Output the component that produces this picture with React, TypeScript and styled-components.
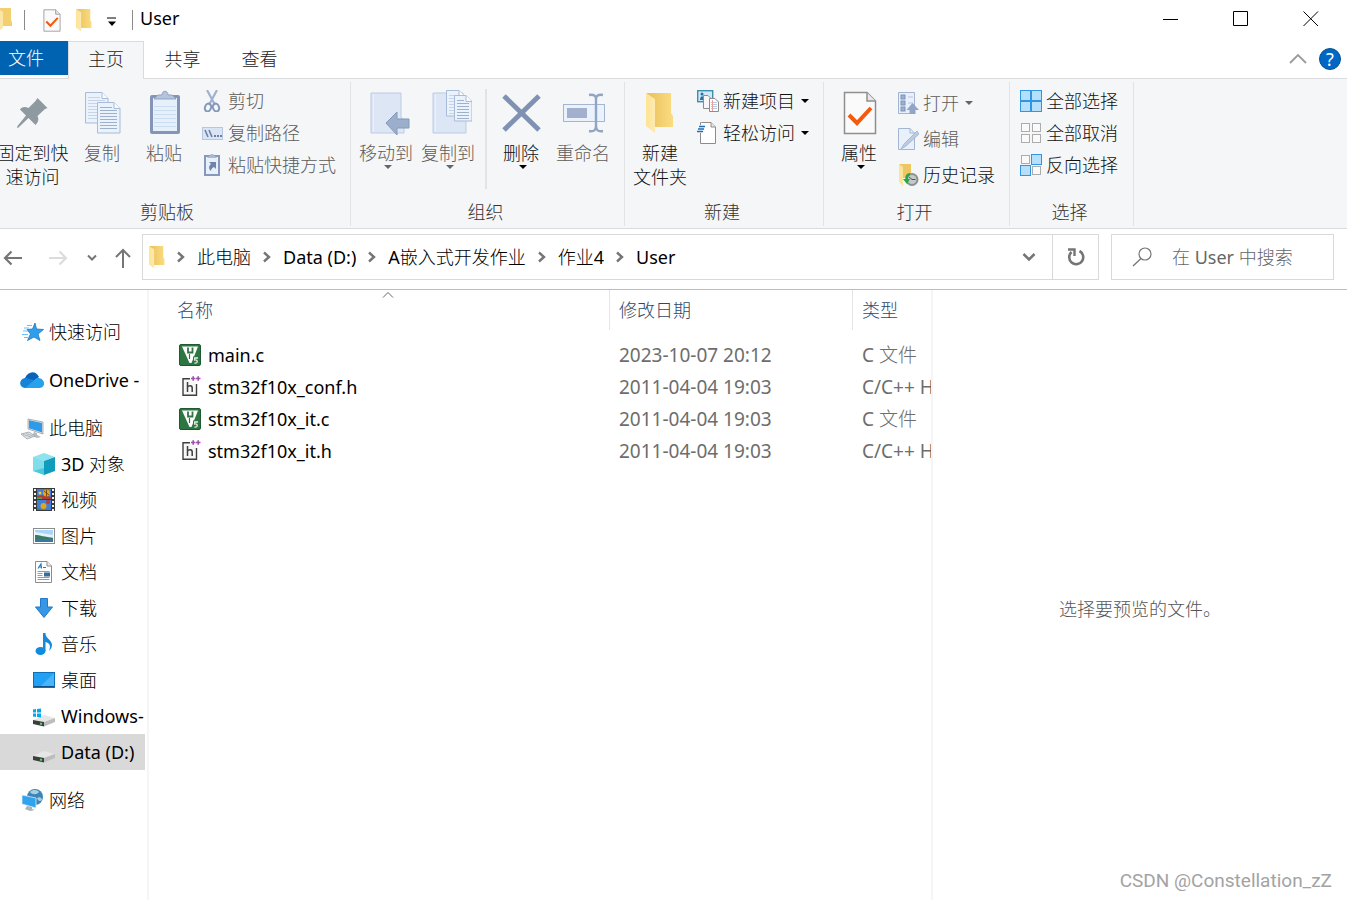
import React from "react";
import styled, { createGlobalStyle, css } from "styled-components";

const GlobalStyle = createGlobalStyle`
  * { box-sizing: border-box; }
  body {
    margin: 0;
    background: #fff;
    color: #000;
    font-family: "Noto Sans", "Noto Sans CJK SC Light", "Noto Sans CJK SC", sans-serif;
    font-size: 18px;
    font-weight: 400;
    line-height: 24px;
  }
  button, input {
    font: inherit;
    color: inherit;
    background: none;
    border: 0;
    padding: 0;
    margin: 0;
  }
  svg { display: block; flex: none; }
`;

const Window = styled.div`
  min-height: 100vh;
  display: flex;
  flex-direction: column;
  overflow: hidden;
  position: relative;
`;

/* ---------- title bar ---------- */

const TitleBar = styled.header`
  display: flex;
  align-items: flex-start;
  height: 41px;
  padding-right: 1px;
`;

const QuickAccess = styled.div`
  display: flex;
  align-items: center;
  height: 40px;
`;

const QuickButton = styled.button`
  width: 32px;
  height: 32px;
  display: grid;
  place-items: center;
`;

const AppIcon = styled.span`
  width: 24px;
  padding-bottom: 3px;
`;

const TitleRule = styled.span`
  width: 1px;
  height: 20px;
  background: #8a8a8a;
`;

const QuickGroup = styled.div`
  display: flex;
  padding-left: 11px;
`;

const MenuArrowButton = styled(QuickButton)`
  width: 24px;
  margin-right: 8px;
  padding-top: 3px;
`;

const Title = styled.h1`
  flex: 1;
  margin: 0;
  padding-left: 7px;
  font-size: 18px;
  font-weight: inherit;
  line-height: 36px;
`;

const CaptionButton = styled.button`
  width: 70px;
  height: 37px;
  display: grid;
  place-items: center;
`;

/* ---------- ribbon tabs ---------- */

const TabBar = styled.nav`
  display: flex;
  align-items: stretch;
  height: 38px;
  border-bottom: 1px solid #dadbdc;
  font-weight: 300;
`;

const FileTab = styled.button`
  width: 68px;
  height: 34px;
  padding-left: 8px;
  text-align: left;
  color: #fff;
  background: #0063b1;
`;

const Tab = styled.button<{ $active?: boolean }>`
  width: 77px;
  height: 38px;
  padding-bottom: 3px;
  color: #222;
  border: 1px solid transparent;
  border-bottom: 0;
  ${(p) =>
    p.$active &&
    css`
      width: 76px;
      background: #f5f6f7;
      border-color: #dadbdc;
    `}
`;

const TabTools = styled.div`
  display: flex;
  align-items: center;
  gap: 12px;
  margin-left: auto;
  padding: 0 6px 2px 0;
`;

const HelpButton = styled.button`
  width: 22px;
  height: 22px;
  border-radius: 50%;
  border: 1px solid #005499;
  background: #0067c5;
  color: #fff;
  font-weight: 400;
  line-height: 20px;
`;

/* ---------- ribbon ---------- */

const Ribbon = styled.section`
  display: flex;
  padding: 3px 0 2px;
  background: #f5f6f7;
  border-bottom: 1px solid #dadbdc;
  font-weight: 300;
`;

const Group = styled.section<{ $width: number; $left?: number; $bleed?: number }>`
  flex: none;
  width: ${(p) => p.$width}px;
  margin-left: ${(p) => -(p.$bleed ?? 0)}px;
  border-right: 1px solid #e1e3e5;
  padding-left: ${(p) => p.$left ?? 0}px;
  display: flex;
  flex-direction: column;
`;

const GroupBody = styled.div`
  display: flex;
  height: 118px;
`;

const GroupLabel = styled.h2<{ $left?: number }>`
  margin: 0 0 0 ${(p) => -(p.$left ?? 0)}px;
  padding-right: 4px;
  font-size: 18px;
  font-weight: inherit;
  text-align: center;
  color: #333;
  height: 26px;
`;

const BigButton = styled.button<{ $width?: number; $muted?: boolean }>`
  flex: none;
  width: ${(p) => p.$width ?? 62}px;
  padding-top: 7px;
  display: flex;
  flex-direction: column;
  align-items: center;
  justify-content: flex-start;
  white-space: nowrap;
  color: ${(p) => (p.$muted ? "#5c5c5c" : "#111")};
`;

const BigLabel = styled.span`
  padding-top: 4px;
`;

const BigArrow = styled.span`
  padding-left: 4px;
`;

const SmallArrow = styled.span`
  padding-left: 2px;
`;

const GroupRule = styled.span`
  width: 2px;
  height: 100px;
  margin: 7px 3px 0 6px;
  background: #e1e3e5;
`;

const SmallColumn = styled.div<{ $row?: number; $left?: number }>`
  display: grid;
  grid-auto-rows: ${(p) => p.$row ?? 32}px;
  align-content: start;
  padding: 3px 0 0 ${(p) => p.$left ?? 0}px;
`;

const SmallButton = styled.button<{ $muted?: boolean }>`
  display: flex;
  align-items: center;
  gap: 4px;
  white-space: nowrap;
  color: ${(p) => (p.$muted ? "#5c5c5c" : "#111")};
`;

/* ---------- address bar ---------- */

const AddressRow = styled.div`
  display: flex;
  align-items: center;
  height: 61px;
  padding: 0 13px 4px 0;
  border-bottom: 1px solid #bcbcbc;
`;

const NavButtons = styled.div`
  display: grid;
  grid-template-columns: 24px 68px 0 50px;
  flex: none;
  width: 142px;
  padding-top: 2px;
`;

const NavButton = styled.button`
  height: 44px;
  display: flex;
  align-items: center;
  justify-content: center;
`;

const UpButton = styled(NavButton)`
  padding-left: 12px;
`;

const AddressBox = styled.div`
  flex: 1;
  min-width: 0;
  display: flex;
  height: 46px;
  border: 1px solid #d9d9d9;
`;

const Crumbs = styled.ol`
  flex: 1;
  display: flex;
  align-items: center;
  list-style: none;
  margin: 0;
  padding: 0 0 0 6px;
  white-space: nowrap;
`;

const Crumb = styled.li`
  display: flex;
  align-items: center;
`;

const CrumbLink = styled.a`
  color: #000;
  text-decoration: none;
`;

const CrumbArrow = styled.span`
  width: 32px;
  display: grid;
  place-items: center;
`;

const AddressTool = styled.button<{ $ruled?: boolean }>`
  width: 46px;
  display: grid;
  place-items: center;
  border-left: ${(p) => (p.$ruled ? "1px solid #d9d9d9" : "0")};
`;

const SearchBox = styled.label`
  flex: none;
  display: flex;
  align-items: center;
  gap: 18px;
  width: 223px;
  height: 46px;
  margin-left: 12px;
  padding-left: 20px;
  border: 1px solid #d9d9d9;
`;

const SearchInput = styled.input`
  width: 150px;
  outline: 0;
  &::placeholder {
    color: #666;
    opacity: 1;
  }
`;

/* ---------- panes ---------- */

const Panes = styled.div`
  flex: 1;
  display: flex;
`;

const NavPane = styled.nav`
  flex: none;
  width: 149px;
  padding: 24px 2px 0 0;
  border-right: 2px solid #f5f5f5;
`;

const NavSection = styled.ul`
  list-style: none;
  margin: 0 0 12px;
  padding: 0;
`;

const NavItem = styled.a<{ $child?: boolean; $selected?: boolean }>`
  display: flex;
  align-items: center;
  gap: 5px;
  height: 36px;
  padding-left: ${(p) => (p.$child ? 32 : 20)}px;
  overflow: hidden;
  white-space: nowrap;
  color: #000;
  text-decoration: none;
  background: ${(p) => (p.$selected ? "#d9d9d9" : "transparent")};
`;

const ListPane = styled.main`
  flex: 1;
  min-width: 0;
  border-right: 2px solid #f5f5f5;
`;

const FileTable = styled.table`
  width: 100%;
  table-layout: fixed;
  border-collapse: separate;
  border-spacing: 0;
`;

const HeadCell = styled.th<{ $width?: number; $first?: boolean }>`
  position: relative;
  width: ${(p) => (p.$width ? `${p.$width}px` : "auto")};
  height: 40px;
  padding: 0 0 0 ${(p) => (p.$first ? 28 : 9)}px;
  border-right: ${(p) => (p.$first !== undefined ? "1px solid #e5e5e5" : "0")};
  font-weight: 300;
  text-align: left;
  color: #2f4868;
`;

const SortMark = styled.span`
  position: absolute;
  top: 0;
  left: 0;
  right: 0;
  display: flex;
  justify-content: center;
  padding: 1px 0 0 18px;
`;

const Cell = styled.td<{ $first?: boolean }>`
  height: 32px;
  padding: 0 0 0 ${(p) => (p.$first ? 30 : 9)}px;
  overflow: hidden;
  white-space: nowrap;
  font-size: ${(p) => (p.$first ? 18 : 19)}px;
  color: ${(p) => (p.$first ? "#000" : "#6d6d6d")};
`;

const FileBody = styled.tbody`
  &::before {
    content: "";
    display: block;
    height: 9px;
  }
`;

const FileName = styled.span`
  display: flex;
  align-items: center;
  gap: 7px;
`;

const Preview = styled.aside`
  flex: none;
  width: 414px;
  padding-top: 28px;
  display: grid;
  place-items: center;
  font-weight: 300;
  color: #555;
`;

const Watermark = styled.div`
  position: absolute;
  right: 15px;
  bottom: 7px;
  font-family: Roboto, sans-serif;
  font-size: 19px;
  color: #a3a3a3;
`;

/* ---------- icons ---------- */

const Folder = ({ w = 16, h = 23 }: { w?: number; h?: number }) => (
  <svg width={w} height={h} viewBox="0 0 28 41" preserveAspectRatio="none">
    <defs>
      <linearGradient id="fback" x1="0" x2="1">
        <stop offset="0" stopColor="#e9c05a" />
        <stop offset="1" stopColor="#fbdc82" />
      </linearGradient>
      <linearGradient id="ffront" x1="0" x2="1">
        <stop offset="0" stopColor="#ffe394" />
        <stop offset="1" stopColor="#fdeab2" />
      </linearGradient>
    </defs>
    <path d="M1 0H25V20L27 23V34H6Z" fill="url(#fback)" />
    <path d="M0 0L9 6V40L0 33Z" fill="url(#ffront)" />
  </svg>
);

const CheckDoc = ({ w, h }: { w: number; h: number }) => (
  <svg width={w} height={h} viewBox="0 0 34 44">
    <path d="M1.5 1.5H24L32.500 10V42.500H1.500Z" fill="#fafafa" stroke="#8e8e8e" strokeWidth="1.500" />
    <path d="M24 1.500V10H32.500" fill="#e8e8e8" stroke="#8e8e8e" strokeWidth="1.500" />
    <path d="M6 24L14 32L28 17" fill="none" stroke="#f4590c" strokeWidth="4" />
  </svg>
);

const Down = ({ color = "#000" }: { color?: string }) => (
  <svg width="8" height="5" viewBox="0 0 8 5">
    <path d="M0 0H8L4 4Z" fill={color} />
  </svg>
);

const Chevron = ({ dir = "right", color = "#757575" }: { dir?: "right" | "down"; color?: string }) =>
  dir === "right" ? (
    <svg width="10" height="12" viewBox="0 0 10 12">
      <path d="M2 1.500L7 6L2 10.500" fill="none" stroke={color} strokeWidth="2.400" />
    </svg>
  ) : (
    <svg width="14" height="10" viewBox="0 0 14 10">
      <path d="M1.500 2L7 7.500L12.500 2" fill="none" stroke={color} strokeWidth="2.600" />
    </svg>
  );

const Big = ({ children }: { children: React.ReactNode }) => (
  <svg width="48" height="48" viewBox="0 0 48 48">
    {children}
  </svg>
);

const Small = ({ children }: { children: React.ReactNode }) => (
  <svg width="22" height="22" viewBox="0 0 22 22">
    {children}
  </svg>
);

const NavIcon = ({ children }: { children: React.ReactNode }) => (
  <svg width="24" height="24" viewBox="0 0 24 24">
    {children}
  </svg>
);

const PinIcon = () => (
  <Big>
    <path
      d="M28.500 9L38.500 19L36 20L28.500 27C30.500 31 28.500 34 26.500 36L19.500 29L9.500 38.500L8 39L8.500 37L17 26.500L11 20.500C12.500 18 15.500 17 19.500 19L26.500 12Z"
      fill="#8f9aa0"
    />
  </Big>
);

const Sheet = ({ x, y, w, h, lines, line }: { x: number; y: number; w: number; h: number; lines: number; line: string }) => (
  <g transform={`translate(${x} ${y})`}>
    <path d={`M.5 .5H${w - 6}L${w} 6.500V${h}H.5Z`} fill="#eaf2fc" stroke="#a9bbd6" />
    <path d={`M${w - 6} .5V6.500H${w}`} fill="#f8fbff" stroke="#a9bbd6" />
    {Array.from({ length: lines }, (_, i) => (
      <path key={i} d={`M3 ${5.5 + i * 3}H${i === 0 ? w - 8 : w - 3}`} stroke={line} />
    ))}
  </g>
);

const CopyIcon = () => (
  <Big>
    <Sheet x={7} y={3} w={23} h={31} lines={8} line="#c5d4e8" />
    <Sheet x={19} y={13} w={23} h={31} lines={8} line="#9db0cc" />
  </Big>
);

const PasteIcon = () => (
  <Big>
    <rect x="10" y="6" width="30" height="39" rx="2" fill="#8495b7" />
    <rect x="13" y="9" width="24" height="33" fill="#e6f0fb" />
    {[17, 21, 25, 29, 33, 37].map((y) => (
      <path key={y} d={`M14 ${y}.5H36`} stroke="#cbdcf0" />
    ))}
    <path d="M14 10L18 6H22C22 1 28 1 28 6H32L36 10Z" fill="#b4c4db" stroke="#8fa3c3" />
  </Big>
);

const FolderBase = () => (
  <>
    <path d="M9 4H39V28L42 32V44H9Z" fill="#dce6f4" stroke="#bccbe2" />
    <path d="M11.500 5V43" stroke="#eaf1fb" />
  </>
);

const MoveIcon = () => (
  <Big>
    <FolderBase />
    <path d="M24 34L35 23V30H47V39H35V46Z" fill="#9bafcd" stroke="#8598ba" />
  </Big>
);

const CopyToIcon = () => (
  <Big>
    <FolderBase />
    <Sheet x={22} y={1} w={19} h={26} lines={7} line="#c5d4e8" />
    <Sheet x={30} y={6} w={18} h={26} lines={7} line="#9db0cc" />
  </Big>
);

const DeleteIcon = () => (
  <Big>
    <path d="M7 7L42 41M42 7L7 41" stroke="#8092b3" strokeWidth="5" />
  </Big>
);

const RenameIcon = () => (
  <Big>
    <rect x="4.500" y="15.500" width="41" height="17" fill="#eaf2fc" stroke="#a3b5d1" />
    <rect x="8" y="19" width="20" height="10" fill="#a2b0ce" />
    <path d="M30 6C35 5 37 7 37 10C37 7 39 5 44 6M37 9V38M30 42C35 43 37 41 37 37C37 41 39 43 44 42" fill="none" stroke="#90a4c3" strokeWidth="2.400" />
  </Big>
);

const CutIcon = () => (
  <Small>
    <path d="M5 0L13 15M15 0L7 15" stroke="#a0b2cf" strokeWidth="2.200" />
    <ellipse cx="6" cy="17.500" rx="3" ry="4" transform="rotate(20 6 17.500)" fill="none" stroke="#8598bb" strokeWidth="2" />
    <ellipse cx="14" cy="17.500" rx="3" ry="4" transform="rotate(-20 14 17.500)" fill="none" stroke="#8598bb" strokeWidth="2" />
  </Small>
);

const PathIcon = () => (
  <Small>
    <rect x=".5" y="5.500" width="20" height="12" fill="#d9e5f4" stroke="#b7c7df" />
    <path d="M3 8L6 15M7 8L10 15" stroke="#6e81a5" strokeWidth="1.600" />
    <path d="M12 14H14M15 14H17M18 14H20" stroke="#6e81a5" strokeWidth="2" />
  </Small>
);

const ShortcutIcon = () => (
  <Small>
    <rect x="3" y="2" width="14" height="19" fill="#e8f0fb" stroke="#8799bb" strokeWidth="2" />
    <path d="M5 4L7 2H8C8-1 12-1 12 2H13L15 4Z" fill="#a9bad4" />
    <path d="M7 8H14V15L12 13C10 14 9 15 9 17C6 14 7 12 9 10Z" fill="#7083aa" />
  </Small>
);

const NewItemIcon = () => (
  <Small>
    <rect x=".7" y=".7" width="15" height="11" fill="#cfeaf7" stroke="#3e8eb0" strokeWidth="1.400" />
    <circle cx="5" cy="4" r="1.500" fill="#2b6f9c" />
    <path d="M3 10C3 5 7 5 7 10Z" fill="#2b6f9c" />
    <path d="M6.500 5.500H11L14.500 9V18.500H6.500Z" fill="#f7f7f7" stroke="#8c8c8c" />
    <path d="M12.500 8.500H18L21.500 12V21.500H12.500Z" fill="#fff" stroke="#8c8c8c" />
    <path d="M14 12.500H20M14 14.500H20M14 16.500H20M14 18.500H20" stroke="#b8c9e4" />
    <path d="M15.500 10V21" stroke="#e8a0a0" />
  </Small>
);

const EasyAccessIcon = () => (
  <Small>
    <path d="M4.500 .5H14L18.500 5V21.500H3.500V.5Z" fill="#fff" stroke="#8c8c8c" />
    <path d="M14 .5V5H18.500" fill="#e8e8e8" stroke="#8c8c8c" />
    <path d="M0 3H8V11H0Z" fill="#f7f8f9" />
    <path d="M2 4.500H8M1 7H7M0 9.500H6" stroke="#1d6fb8" strokeWidth="1.500" />
  </Small>
);

const OpenIcon = () => (
  <Small>
    <path d="M1.500 .5H17.500V21.500H1.500Z" fill="#e8f0fb" stroke="#a3b5d1" />
    {[3, 9, 15].map((y) => (
      <g key={y}>
        <rect x="4" y={y} width="4" height="4" fill="#9db0cf" stroke="#7f93b8" />
        <path d={`M11 ${y + 2}H16`} stroke="#b7c7df" />
      </g>
    ))}
    <path d="M15.500 11L22 18H18.500V22H12.500V18H9.500Z" fill="#93a5c5" />
  </Small>
);

const EditIcon = () => (
  <Small>
    <path d="M1.500 .5H13L17.500 5V21.500H1.500Z" fill="#e8f0fb" stroke="#a3b5d1" />
    <path d="M13 .5V5H17.500" fill="none" stroke="#a3b5d1" />
    <path d="M20 3L22 6L9 18L4 21L7 16Z" fill="#bccbe2" stroke="#9db0cc" strokeWidth=".8" />
  </Small>
);

const HistoryIcon = () => (
  <Small>
    <path d="M2 0H14V14H6Z" fill="#ecc762" />
    <path d="M2 0L6 3V22L2 18Z" fill="#fce49c" />
    <circle cx="15" cy="15.500" r="6.500" fill="#8b9191" />
    <circle cx="15" cy="15.500" r="4.500" fill="#c3c8c8" />
    <path d="M15 15.500L12 13M15 15.500H18.500" stroke="#555" />
    <path d="M13 9C9 9 8 13 8.500 15H6L10 20L13 15H11C11 13 11.500 12 13 11Z" fill="#27a844" />
  </Small>
);

const GridIcon = ({ on }: { on: boolean[] }) => (
  <Small>
    {on.map((active, i) => {
      const x = (i % 2) * 11;
      const y = Math.floor(i / 2) * 11;
      return active ? (
        <rect key={i} x={x + 0.5} y={y + 0.5} width="10" height="10" fill="#b5dffb" stroke="#2f96e6" />
      ) : (
        <rect key={i} x={x + 1.5} y={y + 1.5} width="8" height="8" fill="#fafafa" stroke="#acacac" />
      );
    })}
  </Small>
);

const StarIcon = () => (
  <NavIcon>
    <path d="M15 3L16.500 9L23.500 9.500L18 14L20 20.500L14 17L7.500 20.500L10.500 14L7 9.500L12.500 9Z" fill="#2f9fec" stroke="#1878c2" strokeWidth=".8" />
    <path d="M7 5.500H12M4 8H9M3 11H8M2 14.500H8M4 17.500H8" stroke="#6cc0f5" />
  </NavIcon>
);

const CloudIcon = () => (
  <NavIcon>
    <path d="M5 10C8 3 16 2 19 9L12 14Z" fill="#0a63b8" />
    <path d="M5 20C-2 19-1 10 6 10L14 12L19 20Z" fill="#1583d8" />
    <path d="M5 20L17 10C25 9 27 20 19 20Z" fill="#28a1ec" />
  </NavIcon>
);

const PcIcon = () => (
  <NavIcon>
    <path d="M8 3L23 6V18L8 13Z" fill="#e0e4e8" stroke="#8c949c" strokeWidth=".7" />
    <path d="M9 4.300L22 7V16.500L9 12.200Z" fill="#2f9be8" />
    <path d="M14 16L17 17V19L21 21L17 22L12 20Z" fill="#b4bac0" />
    <path d="M1 18L9 16L15 20L7 23Z" fill="#dfe3e6" stroke="#9aa1a8" strokeWidth=".8" />
    <path d="M3 18.500L11 21M6 17.500L13 20" stroke="#9aa1a8" strokeWidth=".7" />
  </NavIcon>
);

const CubeIcon = () => (
  <NavIcon>
    <path d="M1 5L12 1L23 5L12 9Z" fill="#8fe3ee" />
    <path d="M1 5L12 9V23L1 19Z" fill="#49cbdc" />
    <path d="M23 5L12 9V23L23 19Z" fill="#109cbc" />
    <path d="M1 5L12 9V16L1 19Z" fill="#b9f0f5" opacity=".5" />
  </NavIcon>
);

const VideoIcon = () => (
  <NavIcon>
    <rect x="1" y="0" width="22" height="23" fill="#3a3a3a" />
    <rect x="5" y="1" width="14" height="10" fill="#3f7fd8" />
    <rect x="5" y="12" width="14" height="10" fill="#3f7fd8" />
    <path d="M5 8L12 7L19 9V11H5Z" fill="#b03a34" />
    <path d="M5 9.500H10V11H5Z" fill="#52a94a" />
    <circle cx="14.500" cy="5" r="3.500" fill="#e3a51c" />
    <path d="M14.500 1.500V8.500M12 3L17 7" stroke="#6b3a12" strokeWidth=".8" />
    <circle cx="8" cy="5" r="1.500" fill="#f0cf3a" />
    <circle cx="11.500" cy="18" r="3" fill="#e3a51c" />
    <circle cx="16" cy="14" r="2" fill="#c8372c" />
    <path d="M5 20L10 22H5Z" fill="#408438" />
    <path d="M3 1V23M21 1V23" stroke="#f2f2f2" strokeWidth="2" strokeDasharray="2 2" />
  </NavIcon>
);

const PictureIcon = () => (
  <NavIcon>
    <rect x="1.500" y="4.500" width="21" height="15" fill="#fff" stroke="#8c8c8c" />
    <rect x="3" y="6" width="18" height="12" fill="#a9d6f5" />
    <path d="M3 8L21 11V13H3Z" fill="#e4f2fb" />
    <path d="M3 11C8 11 13 13 21 14V16H3Z" fill="#3d7a63" />
    <path d="M3 15H21V18H3Z" fill="#3577a6" />
  </NavIcon>
);

const DocIcon = () => (
  <NavIcon>
    <path d="M3.500 1.500H15L19.500 6V22.500H3.500Z" fill="#fff" stroke="#8c8c8c" />
    <path d="M15 1.500V6H19.500" fill="#eee" stroke="#8c8c8c" />
    <path d="M6 8.500L9 4L9.500 8.500M7 7H9.500" stroke="#1d7dc6" fill="none" strokeWidth="1.200" />
    <path d="M11 7.500H14" stroke="#1d7dc6" />
    <path d="M5.500 11.500H17.500M5.500 13.500H10.500M5.500 15.500H10.500M5.500 17.500H17.500M5.500 19.500H17.500" stroke="#9a9a9a" />
    <rect x="12" y="12.500" width="6" height="4" fill="#2f6e9e" />
  </NavIcon>
);

const DownloadIcon = () => (
  <NavIcon>
    <path d="M8.500 2.500H15.500V11H20.500L12 21.500L3.500 11H8.500Z" fill="#3796e6" stroke="#1f78c8" />
  </NavIcon>
);

const MusicIcon = () => (
  <NavIcon>
    <ellipse cx="8.500" cy="19" rx="5" ry="4" fill="#108bdd" />
    <path d="M11 1H13.500C13 6 20 8 20 13C20 16 18 18 17 19C19 14 18 11 13.500 10V19H11Z" fill="#108bdd" />
  </NavIcon>
);

const DesktopIcon = () => (
  <NavIcon>
    <rect x="1.500" y="4.500" width="21" height="15" fill="#21a1f3" stroke="#0f6fb5" />
    <path d="M22 5V18L9 18Z" fill="#48b5fa" />
    <path d="M2 18.500H22" stroke="#0b4f86" />
  </NavIcon>
);

const DriveIcon = ({ system }: { system?: boolean }) => (
  <NavIcon>
    <path d="M1 16L12 11L23 14L12 18Z" fill="#e6e6e6" />
    <path d="M12 18L23 14V18L12 22.500Z" fill="#bdbdbd" />
    <path d="M1 16L12 18V22.500L1 20Z" fill="#3d3d3d" />
    <path d="M8 19.500L10 20" stroke="#45e05f" strokeWidth="2" />
    {system && <path d="M1 5.500L4 5V8.500H1ZM5 5L9 4.500V8.500H5ZM1 9.500H4V13L1 12.500ZM5 9.500H9V13.500L5 13Z" fill="#00a8ee" />}
  </NavIcon>
);

const NetworkIcon = () => (
  <NavIcon>
    <circle cx="15" cy="9" r="8" fill="#3d85b5" />
    <path d="M10 4C13 1 18 2 19 4C17 7 12 7 10 4ZM17 10C20 8 22 10 22 12C20 14 18 13 17 10Z" fill="#a8cfe2" />
    <path d="M2 7L16 10V20L2 16Z" fill="#2ea3ef" stroke="#e1ecf4" strokeWidth=".8" />
    <path d="M7 18L12 19V21L15 22L10 23L5 21Z" fill="#aab4bb" />
  </NavIcon>
);

const CFileIcon = () => (
  <Small>
    <rect x=".5" y=".5" width="21" height="21" rx="1.500" fill="#2d7541" stroke="#1d5a30" />
    <path d="M3 2.500H19L12.500 19H10.500Z" fill="#fff" />
    <path d="M9 3.500V9.500M9 8.500H13M13.500 3.500V9.500" fill="none" stroke="#2d7541" strokeWidth="1.800" />
    <path d="M10.500 10V15" stroke="#2d7541" strokeWidth="1.200" />
    <rect x="14" y="12.500" width="6.500" height="8" fill="#2d7541" />
    <path d="M19 14H15.700V16C19 15.500 19.200 19.500 15.500 19" fill="none" stroke="#e4f1e7" strokeWidth="1.300" />
  </Small>
);

const HFileIcon = () => (
  <Small>
    <path d="M11 2.700H4V19.300H17.500V8" fill="#f7f7f7" stroke="#3f3f3f" strokeWidth="1.400" />
    <path d="M8.500 6V16M8.500 11C9.500 9.500 13.200 9 13.200 12V16" fill="none" stroke="#3f3f3f" strokeWidth="1.500" />
    <path d="M12 2.500H16.500M14.200 .2V4.800M17 2.500H21.500M19.200 .2V4.800" stroke="#a04fae" strokeWidth="1.600" />
  </Small>
);

/* ---------- data ---------- */

const crumbs = ["此电脑", "Data (D:)", "A嵌入式开发作业", "作业4", "User"];

const pcChildren = [
  { label: "3D 对象", icon: <CubeIcon /> },
  { label: "视频", icon: <VideoIcon /> },
  { label: "图片", icon: <PictureIcon /> },
  { label: "文档", icon: <DocIcon /> },
  { label: "下载", icon: <DownloadIcon /> },
  { label: "音乐", icon: <MusicIcon /> },
  { label: "桌面", icon: <DesktopIcon /> },
  { label: "Windows-", icon: <DriveIcon system /> },
  { label: "Data (D:)", icon: <DriveIcon />, selected: true },
];

const files = [
  { name: "main.c", date: "2023-10-07 20:12", type: "C 文件", icon: <CFileIcon /> },
  { name: "stm32f10x_conf.h", date: "2011-04-04 19:03", type: "C/C++ H", icon: <HFileIcon /> },
  { name: "stm32f10x_it.c", date: "2011-04-04 19:03", type: "C 文件", icon: <CFileIcon /> },
  { name: "stm32f10x_it.h", date: "2011-04-04 19:03", type: "C/C++ H", icon: <HFileIcon /> },
];

export default function App() {
  return (
    <Window>
      <GlobalStyle />
      <TitleBar>
        <QuickAccess>
          <AppIcon>
            <svg width="12" height="22" viewBox="0 0 12 22">
              <path d="M0 0H11V12L12 14V18H0Z" fill="#f3cf70" />
              <path d="M0 2L3 4V20L0 22Z" fill="#fce6a6" />
            </svg>
          </AppIcon>
          <TitleRule />
          <QuickGroup>
            <QuickButton aria-label="属性">
              <CheckDoc w={18} h={23} />
            </QuickButton>
            <QuickButton aria-label="新建文件夹">
              <Folder />
            </QuickButton>
          </QuickGroup>
          <MenuArrowButton aria-label="自定义快速访问工具栏">
            <svg width="10" height="10" viewBox="0 0 10 10">
              <path d="M0 1H9" stroke="#000" />
              <path d="M1 4.500H9L5 9Z" fill="#000" />
            </svg>
          </MenuArrowButton>
          <TitleRule />
        </QuickAccess>
        <Title>User</Title>
        <CaptionButton aria-label="最小化">
          <svg width="16" height="16" viewBox="0 0 16 16">
            <path d="M0 8.500H15" stroke="#000" />
          </svg>
        </CaptionButton>
        <CaptionButton aria-label="最大化">
          <svg width="16" height="16" viewBox="0 0 16 16">
            <path d="M.5 .5H14.500V14.500H.5Z" fill="none" stroke="#000" />
          </svg>
        </CaptionButton>
        <CaptionButton aria-label="关闭">
          <svg width="16" height="16" viewBox="0 0 16 16">
            <path d="M.5 .5L15 15M15 .5L.5 15" stroke="#000" />
          </svg>
        </CaptionButton>
      </TitleBar>

      <TabBar>
        <FileTab>文件</FileTab>
        <Tab $active>主页</Tab>
        <Tab>共享</Tab>
        <Tab>查看</Tab>
        <TabTools>
          <button aria-label="最小化功能区">
            <svg width="18" height="12" viewBox="0 0 18 12">
              <path d="M1 10L9 2L17 10" fill="none" stroke="#9b9b9b" strokeWidth="1.800" />
            </svg>
          </button>
          <HelpButton>?</HelpButton>
        </TabTools>
      </TabBar>

      <Ribbon>
        <Group $width={367} $left={10} $bleed={16}>
          <GroupBody>
            <BigButton $width={77}>
              <PinIcon />
              <BigLabel>
                固定到快
                <br />
                速访问
              </BigLabel>
            </BigButton>
            <BigButton $muted>
              <CopyIcon />
              <BigLabel>复制</BigLabel>
            </BigButton>
            <BigButton $muted>
              <PasteIcon />
              <BigLabel>粘贴</BigLabel>
            </BigButton>
            <SmallColumn $left={7}>
              <SmallButton $muted><CutIcon />剪切</SmallButton>
              <SmallButton $muted><PathIcon />复制路径</SmallButton>
              <SmallButton $muted><ShortcutIcon />粘贴快捷方式</SmallButton>
            </SmallColumn>
          </GroupBody>
          <GroupLabel $left={6}>剪贴板</GroupLabel>
        </Group>

        <Group $width={274} $left={4}>
          <GroupBody>
            <BigButton $muted>
              <MoveIcon />
              <BigLabel>移动到</BigLabel>
              <BigArrow><Down color="#666" /></BigArrow>
            </BigButton>
            <BigButton $muted>
              <CopyToIcon />
              <BigLabel>复制到</BigLabel>
              <BigArrow><Down color="#666" /></BigArrow>
            </BigButton>
            <GroupRule />
            <BigButton>
              <DeleteIcon />
              <BigLabel>删除</BigLabel>
              <BigArrow><Down /></BigArrow>
            </BigButton>
            <BigButton $muted>
              <RenameIcon />
              <BigLabel>重命名</BigLabel>
            </BigButton>
          </GroupBody>
          <GroupLabel $left={4}>组织</GroupLabel>
        </Group>

        <Group $width={199}>
          <GroupBody>
            <BigButton $width={70}>
              <Big>
                <g transform="translate(10 4)">
                  <Folder w={28} h={41} />
                </g>
              </Big>
              <BigLabel>
                新建
                <br />
                文件夹
              </BigLabel>
            </BigButton>
            <SmallColumn $left={2}>
              <SmallButton><NewItemIcon />新建项目 <SmallArrow><Down /></SmallArrow></SmallButton>
              <SmallButton><EasyAccessIcon />轻松访问 <SmallArrow><Down /></SmallArrow></SmallButton>
            </SmallColumn>
          </GroupBody>
          <GroupLabel>新建</GroupLabel>
        </Group>

        <Group $width={186}>
          <GroupBody>
            <BigButton $width={70}>
              <Big>
                <g transform="translate(8 2)">
                  <CheckDoc w={34} h={44} />
                </g>
              </Big>
              <BigLabel>属性</BigLabel>
              <BigArrow><Down /></BigArrow>
            </BigButton>
            <SmallColumn $row={36} $left={3}>
              <SmallButton $muted><OpenIcon />打开 <SmallArrow><Down color="#666" /></SmallArrow></SmallButton>
              <SmallButton $muted><EditIcon />编辑</SmallButton>
              <SmallButton><HistoryIcon />历史记录</SmallButton>
            </SmallColumn>
          </GroupBody>
          <GroupLabel>打开</GroupLabel>
        </Group>

        <Group $width={124}>
          <GroupBody>
            <SmallColumn $left={10}>
              <SmallButton><GridIcon on={[true, true, true, true]} />全部选择</SmallButton>
              <SmallButton><GridIcon on={[false, false, false, false]} />全部取消</SmallButton>
              <SmallButton><GridIcon on={[false, true, true, false]} />反向选择</SmallButton>
            </SmallColumn>
          </GroupBody>
          <GroupLabel>选择</GroupLabel>
        </Group>
      </Ribbon>

      <AddressRow>
        <NavButtons>
          <NavButton aria-label="后退">
            <svg width="20" height="16" viewBox="0 0 20 16">
              <path d="M20 8H3M9.500 1.500L3 8L9.500 14.500" fill="none" stroke="#757575" strokeWidth="2.200" />
            </svg>
          </NavButton>
          <NavButton aria-label="前进">
            <svg width="20" height="16" viewBox="0 0 20 16">
              <path d="M1 8H18M11.500 1.500L18 8L11.500 14.500" fill="none" stroke="#dcdcdc" strokeWidth="2.200" />
            </svg>
          </NavButton>
          <NavButton aria-label="最近浏览的位置">
            <svg width="10" height="8" viewBox="0 0 10 8">
              <path d="M1 1.500L5 5.500L9 1.500" fill="none" stroke="#757575" strokeWidth="2" />
            </svg>
          </NavButton>
          <UpButton aria-label="上移">
            <svg width="16" height="20" viewBox="0 0 16 20">
              <path d="M8 20V2M1 9L8 2L15 9" fill="none" stroke="#757575" strokeWidth="2" />
            </svg>
          </UpButton>
        </NavButtons>
        <AddressBox>
          <Crumbs>
            <Folder />
            {crumbs.map((label) => (
              <Crumb key={label}>
                <CrumbArrow><Chevron /></CrumbArrow>
                <CrumbLink href="#">{label}</CrumbLink>
              </Crumb>
            ))}
          </Crumbs>
          <AddressTool aria-label="展开地址"><Chevron dir="down" /></AddressTool>
          <AddressTool $ruled aria-label="刷新">
            <svg width="18" height="18" viewBox="0 0 18 18">
              <path d="M12.500 3A7 7 0 1 1 4.500 4" fill="none" stroke="#757575" strokeWidth="2.600" />
              <path d="M1 1.500H7.500V8" fill="none" stroke="#757575" strokeWidth="2.400" />
            </svg>
          </AddressTool>
        </AddressBox>
        <SearchBox>
          <svg width="22" height="20" viewBox="0 0 22 20">
            <circle cx="13" cy="7" r="6" fill="none" stroke="#757575" strokeWidth="1.200" />
            <path d="M9 11.500L1 19" stroke="#757575" strokeWidth="1.300" />
          </svg>
          <SearchInput type="text" aria-label="搜索" placeholder="在 User 中搜索" />
        </SearchBox>
      </AddressRow>

      <Panes>
        <NavPane>
          <NavSection>
            <li><NavItem href="#"><StarIcon />快速访问</NavItem></li>
          </NavSection>
          <NavSection>
            <li><NavItem href="#"><CloudIcon />OneDrive -</NavItem></li>
          </NavSection>
          <NavSection>
            <li><NavItem href="#"><PcIcon />此电脑</NavItem></li>
            {pcChildren.map((item) => (
              <li key={item.label}>
                <NavItem href="#" $child $selected={item.selected}>
                  {item.icon}
                  {item.label}
                </NavItem>
              </li>
            ))}
          </NavSection>
          <NavSection>
            <li><NavItem href="#"><NetworkIcon />网络</NavItem></li>
          </NavSection>
        </NavPane>

        <ListPane>
          <FileTable>
            <thead>
              <tr>
                <HeadCell $first>
                  名称
                  <SortMark>
                    <svg width="12" height="8" viewBox="0 0 12 8">
                      <path d="M1 6.500L6 1.500L11 6.500" fill="none" stroke="#666" />
                    </svg>
                  </SortMark>
                </HeadCell>
                <HeadCell $width={243} $first={false}>修改日期</HeadCell>
                <HeadCell $width={78}>类型</HeadCell>
              </tr>
            </thead>
            <FileBody>
              {files.map((f) => (
                <tr key={f.name}>
                  <Cell $first>
                    <FileName>{f.icon}{f.name}</FileName>
                  </Cell>
                  <Cell>{f.date}</Cell>
                  <Cell>{f.type}</Cell>
                </tr>
              ))}
            </FileBody>
          </FileTable>
        </ListPane>

        <Preview>选择要预览的文件。</Preview>
      </Panes>

      <Watermark>CSDN @Constellation_zZ</Watermark>
    </Window>
  );
}
